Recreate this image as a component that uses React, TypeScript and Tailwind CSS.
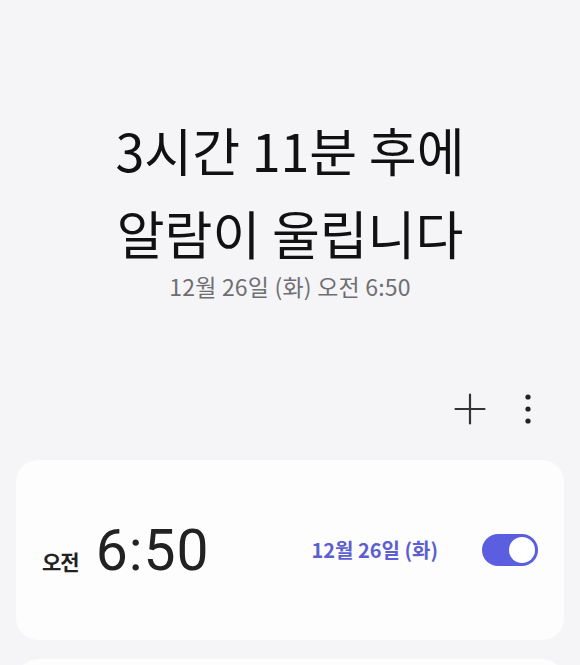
import React from "react";

const KR = { fontFamily: '"Noto Sans CJK KR", "Noto Sans", sans-serif' };
const NUM = { fontFamily: 'Roboto, "Noto Sans CJK KR", sans-serif' };

function Toggle() {
  return (
    <div className="w-[56px] h-[32px] rounded-full bg-[#5b5ede] p-[3px] flex justify-end">
      <div className="w-[26px] h-[26px] rounded-full bg-white" />
    </div>
  );
}

export default function App() {
  return (
    <div className="w-[580px] h-[665px] overflow-hidden bg-[#f5f5f7]" style={KR}>
      <div className="pt-[108px] flex flex-col items-center text-[#111]">
        <div className="text-[52px] leading-[83px] font-normal">3시간 11분 후에</div>
        <div className="text-[52px] leading-[83px] font-normal">알람이 울립니다</div>
        <div className="text-[23px] leading-[24px] text-[#6f6f73] tracking-[0.2px]">12월 26일 (화) 오전 6:50</div>
      </div>

      <div className="mt-[87px] h-[48px] flex items-center justify-end pr-[44px] gap-[34px]">
        <svg width="32" height="32" viewBox="0 0 32 32" fill="none">
          <path d="M16 1.5V30.5M1.5 16H30.5" stroke="#333" strokeWidth="2.2" strokeLinecap="round" />
        </svg>
        <svg width="16" height="32" viewBox="0 0 16 32" fill="#222">
          <circle cx="8" cy="4" r="2.6" />
          <circle cx="8" cy="16" r="2.6" />
          <circle cx="8" cy="28" r="2.6" />
        </svg>
      </div>

      <div className="mt-[27px] mx-[16px] h-[180px] rounded-[22px] bg-[#fdfdfd] flex items-center pl-[26px] pr-[26px]">
        <div className="flex items-baseline gap-[17px]">
          <span className="text-[21px] font-semibold text-[#222] tracking-[-1px]">오전</span>
          <span className="text-[57px] leading-none font-normal text-[#222] tracking-[1px]" style={NUM}>6:50</span>
        </div>
        <div className="ml-auto flex items-center gap-[44px]">
          <span className="text-[20px] font-semibold text-[#5b5fd2]">12월 26일 (화)</span>
          <Toggle />
        </div>
      </div>

      <div className="mt-[19px] mx-[16px] h-[180px] rounded-[22px] bg-[#fdfdfd]" />
    </div>
  );
}
